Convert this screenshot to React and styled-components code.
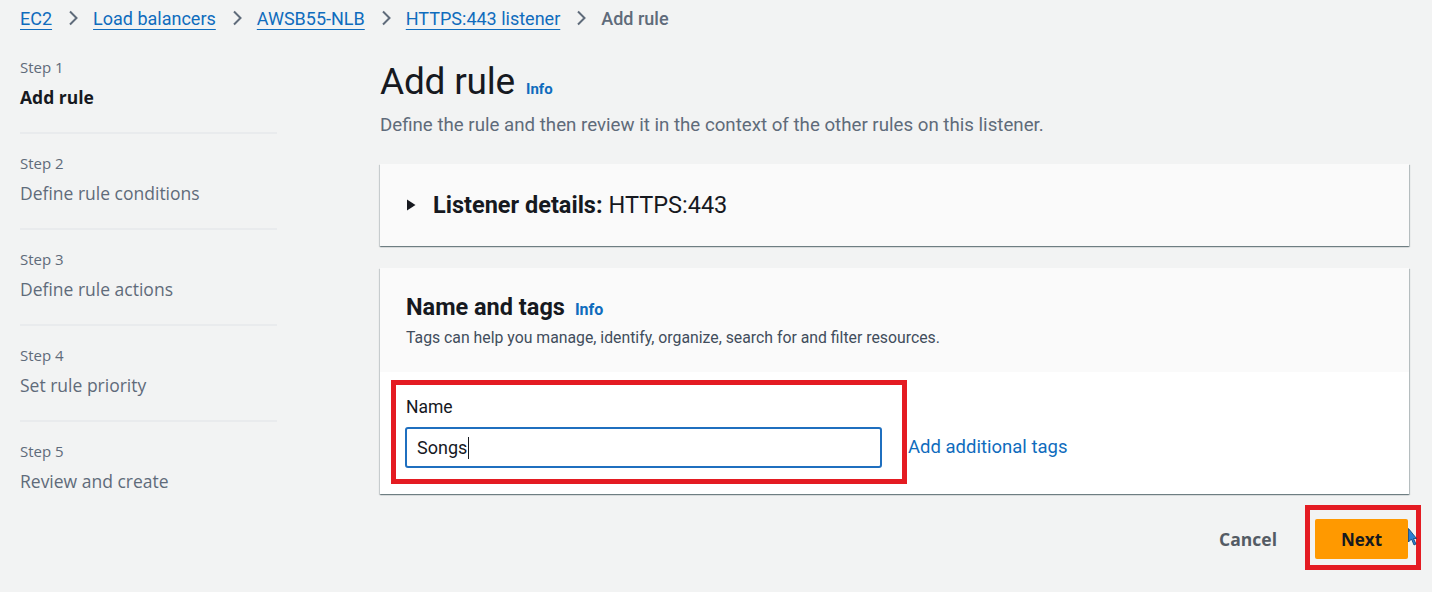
import React from 'react';
import styled, { createGlobalStyle } from 'styled-components';

const GlobalStyle = createGlobalStyle`
    html, body {
        margin: 0;
        padding: 0;
        background: #f2f3f3;
        overflow: hidden;
    }
    * {
        box-sizing: border-box;
    }
`;

const Page = styled.div`
    width: 1432px;
    height: 592px;
    padding: 0 23px 0 20px;
    font-family: Roboto, "Liberation Sans", sans-serif;
    color: #16191f;
`;

const Breadcrumbs = styled.nav`
    display: flex;
    align-items: center;
    height: 36px;
    font-size: 18px;
    .crumb {
        color: #0f6cbd;
        text-decoration: underline;
        text-underline-offset: 4px;
        text-decoration-thickness: 1px;
    }
    .current {
        color: #5f6b7a;
        font-weight: 500;
    }
    .sep {
        margin: 0 15px 0 16px;
        display: flex;
    }
`;

const Layout = styled.div`
    display: grid;
    grid-template-columns: 257px 1fr;
    column-gap: 103px;
    padding-top: 22px;
`;

const Steps = styled.ol`
    list-style: none;
    margin: 0;
    padding: 0;
    font-family: "Open Sans", "Noto Sans", sans-serif;
`;

const Step = styled.li`
    padding: 0 0 22px;
    margin-bottom: 20px;
    border-bottom: 2px solid ${p => (p.$last ? 'transparent' : '#e9ebed')};
    .label {
        font-size: 15px;
        line-height: 19px;
        color: #5f6b7a;
    }
    .title {
        margin-top: 8px;
        font-size: 17.5px;
        line-height: 25px;
        color: ${p => (p.$active ? '#16191f' : '#5f6b7a')};
        font-weight: ${p => (p.$active ? 700 : 400)};
    }
`;

const Main = styled.main`
    display: flex;
    flex-direction: column;
    padding-top: 2px;
`;

const Heading = styled.h1`
    margin: 0;
    display: flex;
    align-items: baseline;
    gap: 11px;
    font-size: 37px;
    line-height: 44px;
    font-weight: 400;
    letter-spacing: -0.2px;
`;

const InfoLink = styled.span`
    color: #0f6cbd;
    font-weight: 700;
    font-size: ${p => p.$size || 15}px;
    letter-spacing: 0;
`;

const Description = styled.p`
    margin: 3px 0 0;
    font-size: 18.7px;
    line-height: 22px;
    color: #5f6b7a;
`;

const Card = styled.section`
    background: ${p => p.$bg || '#fafafa'};
    box-shadow: 0 1px 1px 0 rgba(0, 28, 36, 0.35), 1px 1px 1px 0 rgba(0, 28, 36, 0.2),
        -1px 1px 1px 0 rgba(0, 28, 36, 0.12);
    margin-top: ${p => p.$mt || 0}px;
`;

const Expander = styled.div`
    display: flex;
    align-items: center;
    height: 82px;
    padding-left: 26px;
    font-size: 23.5px;
    gap: 17px;
    strong {
        font-weight: 700;
        margin-right: 6px;
    }
`;

const CardHeader = styled.div`
    background: #fafafa;
    height: 104px;
    padding: 25px 26px 0;
    h2 {
        margin: 0;
        display: flex;
        align-items: baseline;
        gap: 10px;
        font-size: 23.5px;
        line-height: 28px;
        font-weight: 700;
    }
    p {
        margin: 4px 0 0;
        font-size: 15.8px;
        line-height: 20px;
        color: #414d5c;
    }
`;

const CardBody = styled.div`
    background: #ffffff;
    padding: 25px 26px 26px 25px;
    display: flex;
    align-items: flex-end;
`;

const Field = styled.div`
    position: relative;
    display: flex;
    flex-direction: column;
    gap: 10px;
    label {
        padding-left: 1px;
        font-size: 17.5px;
        line-height: 20px;
    }
`;

const Highlight = styled.div`
    position: absolute;
    left: ${p => p.$left}px;
    top: ${p => p.$top}px;
    width: ${p => p.$w}px;
    height: ${p => p.$h}px;
    border: 5px solid #e41b22;
    pointer-events: none;
`;

const TextInput = styled.div`
    width: 477px;
    height: 41px;
    border: 2px solid #1f6fbf;
    border-radius: 3px;
    padding: 0 10px;
    display: flex;
    align-items: center;
    font-size: 18px;
    .caret {
        width: 1px;
        height: 22px;
        background: #16191f;
        margin-left: 1px;
    }
`;

const TagsLink = styled.span`
    color: #0f6cbd;
    font-size: 18.5px;
    line-height: 41px;
    margin-left: 26px;
`;

const Footer = styled.div`
    display: flex;
    justify-content: flex-end;
    align-items: center;
    margin-top: 25px;
    gap: 37px;
`;

const Button = styled.button`
    position: relative;
    border: none;
    font-family: "Open Sans", "Noto Sans", sans-serif;
    font-size: ${p => (p.$primary ? 17 : 17.5)}px;
    font-weight: 700;
    height: 40px;
    border-radius: 2px;
    padding: 0;
    width: ${p => (p.$primary ? '93px' : 'auto')};
    background: ${p => (p.$primary ? '#ff9900' : 'transparent')};
    color: ${p => (p.$primary ? '#16191f' : '#545b64')};
    margin-right: 1px;
`;

const Pointer = styled.svg`
    position: absolute;
    left: 93px;
    top: 9px;
`;

const Chevron = () => (
    <svg width="10" height="16" viewBox="0 0 10 16">
        <path d="M2 1.5 L8.5 8 L2 14.5" fill="none" stroke="#5f6b7a" strokeWidth="2" />
    </svg>
);

const steps = [
    { label: 'Step 1', title: 'Add rule' },
    { label: 'Step 2', title: 'Define rule conditions' },
    { label: 'Step 3', title: 'Define rule actions' },
    { label: 'Step 4', title: 'Set rule priority' },
    { label: 'Step 5', title: 'Review and create' },
];

const crumbs = ['EC2', 'Load balancers', 'AWSB55-NLB', 'HTTPS:443 listener'];

export default function App() {
    return (
        <Page>
            <GlobalStyle />
            <Breadcrumbs>
                {crumbs.map(c => (
                    <React.Fragment key={c}>
                        <span className="crumb">{c}</span>
                        <span className="sep"><Chevron /></span>
                    </React.Fragment>
                ))}
                <span className="current">Add rule</span>
            </Breadcrumbs>
            <Layout>
                <Steps>
                    {steps.map((s, i) => (
                        <Step key={s.label} $active={i === 0} $last={i === steps.length - 1}>
                            <div className="label">{s.label}</div>
                            <div className="title">{s.title}</div>
                        </Step>
                    ))}
                </Steps>
                <Main>
                    <Heading>
                        Add rule <InfoLink>Info</InfoLink>
                    </Heading>
                    <Description>
                        Define the rule and then review it in the context of the other rules on this listener.
                    </Description>
                    <Card $mt={28}>
                        <Expander>
                            <svg width="10" height="12" viewBox="0 0 10 12">
                                <path d="M1 0.5 L9.5 6 L1 11.5 Z" fill="#16191f" />
                            </svg>
                            <span><strong>Listener details:</strong>HTTPS:443</span>
                        </Expander>
                    </Card>
                    <Card $mt={22}>
                        <CardHeader>
                            <h2>Name and tags <InfoLink $size={16}>Info</InfoLink></h2>
                            <p>Tags can help you manage, identify, organize, search for and filter resources.</p>
                        </CardHeader>
                        <CardBody>
                            <Field>
                                <label>Name</label>
                                <TextInput>
                                    Songs<span className="caret" />
                                </TextInput>
                                <Highlight $left={-14} $top={-17} $w={516} $h={104} />
                            </Field>
                            <TagsLink>Add additional tags</TagsLink>
                        </CardBody>
                    </Card>
                    <Footer>
                        <Button>Cancel</Button>
                        <Button $primary>
                            Next
                            <Highlight $left={-10} $top={-14} $w={116} $h={65} />
                            <Pointer width="9" height="18" viewBox="0 0 9 18">
                                <path d="M0.5 0.5 L0.5 14 L3.5 11 L6 17 L8 16 L5.5 10.5 L8.5 10.5 Z" fill="#2a7fd4" stroke="#0b3d6e" strokeWidth="0.8" />
                            </Pointer>
                        </Button>
                    </Footer>
                </Main>
            </Layout>
        </Page>
    );
}
